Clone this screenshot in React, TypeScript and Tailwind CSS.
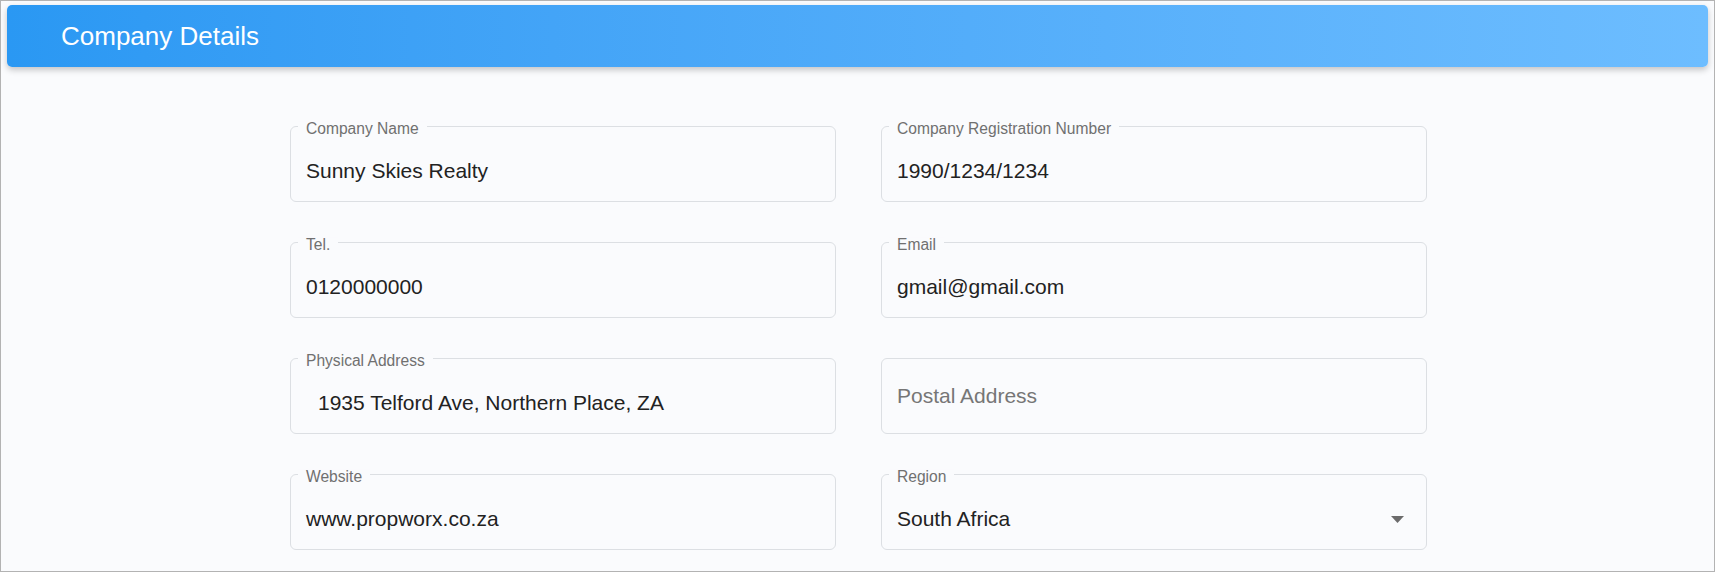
const fields: { label?: string; value?: string; placeholder?: string; indent?: boolean; select?: boolean }[] = [
  { label: "Company Name", value: "Sunny Skies Realty" },
  { label: "Company Registration Number", value: "1990/1234/1234" },
  { label: "Tel.", value: "0120000000" },
  { label: "Email", value: "gmail@gmail.com" },
  { label: "Physical Address", value: "1935 Telford Ave, Northern Place, ZA", indent: true },
  { placeholder: "Postal Address" },
  { label: "Website", value: "www.propworx.co.za" },
  { label: "Region", value: "South Africa", select: true },
];

function Field({ label, value, placeholder, indent, select }: (typeof fields)[number]) {
  return (
    <div
      className={`relative h-[76px] rounded-[6px] border border-[#dcdfe3] flex items-center pl-[15px] pr-[22px] ${
        label ? "pt-[14px]" : ""
      }`}
    >
      {label && (
        <span className="absolute left-[7px] top-[2px] -translate-y-1/2 px-[8px] bg-[#fafbfd] text-[15.6px] leading-none text-[#707070]">
          {label}
        </span>
      )}
      {value && (
        <span className={`flex-1 text-[21px] text-[#222] ${indent ? "pl-[12px]" : ""}`}>{value}</span>
      )}
      {placeholder && <span className="flex-1 text-[21px] text-[#767676]">{placeholder}</span>}
      {select && (
        <svg width="13" height="7" viewBox="0 0 13 7" className="shrink-0">
          <polygon points="0,0 13,0 6.5,7" fill="#6b6b6b" />
        </svg>
      )}
    </div>
  );
}

export default function App() {
  return (
    <div
      className="w-[1715px] h-[572px] border border-[#b3b3b3] bg-[#fafbfd] overflow-hidden"
      style={{ fontFamily: '"Liberation Sans", Arial, sans-serif' }}
    >
      {/* Header bar */}
      <div className="mx-[6px] mt-[4px] h-[62px] rounded-[5px] bg-gradient-to-r from-[#2a98f3] to-[#6dbdff] shadow-[0_3px_6px_rgba(0,0,0,0.22)] flex items-center pl-[54px]">
        <h1 className="text-[26px] text-white font-normal">Company Details</h1>
      </div>

      {/* Form grid */}
      <div className="mt-[59px] mx-auto w-[1137px] grid grid-cols-[546px_546px] gap-x-[45px] gap-y-[40px] translate-x-[1px]">
        {fields.map((f, i) => (
          <Field key={i} {...f} />
        ))}
      </div>
    </div>
  );
}
